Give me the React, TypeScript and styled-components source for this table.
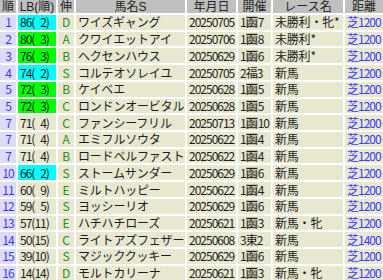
import React from 'react';
import styled, { createGlobalStyle } from 'styled-components';

const GlobalStyle = createGlobalStyle`
  body {
    margin: 0;
    background: #ffffff;
  }
`;

type Tone = 'cyan' | 'lime' | 'plain';

interface IRow {
  rank: number;
  lb: string;
  tone: Tone;
  grade: string;
  name: string;
  date: string;
  venue: string;
  race: string;
  dist: string;
}

const rows: IRow[] = [
  { rank: 1, lb: '86( 2)', tone: 'cyan', grade: 'D', name: 'ワイズギャング', date: '20250705', venue: '1函7', race: '未勝利・牝*', dist: '芝1200' },
  { rank: 2, lb: '80( 3)', tone: 'lime', grade: 'A', name: 'クワイエットアイ', date: '20250706', venue: '1函8', race: '未勝利*', dist: '芝1200' },
  { rank: 3, lb: '76( 3)', tone: 'lime', grade: 'B', name: 'ヘクセンハウス', date: '20250629', venue: '1函6', race: '未勝利*', dist: '芝1200' },
  { rank: 4, lb: '74( 2)', tone: 'cyan', grade: 'S', name: 'コルテオソレイユ', date: '20250705', venue: '2福3', race: '新馬', dist: '芝1200' },
  { rank: 5, lb: '72( 3)', tone: 'lime', grade: 'B', name: 'ケイベエ', date: '20250628', venue: '1函5', race: '新馬', dist: '芝1200' },
  { rank: 5, lb: '72( 3)', tone: 'lime', grade: 'C', name: 'ロンドンオービタル', date: '20250628', venue: '1函5', race: '新馬', dist: '芝1200' },
  { rank: 7, lb: '71( 4)', tone: 'plain', grade: 'C', name: 'ファンシーフリル', date: '20250713', venue: '1函10', race: '新馬', dist: '芝1200' },
  { rank: 7, lb: '71( 4)', tone: 'plain', grade: 'A', name: 'エミフルソウタ', date: '20250622', venue: '1函4', race: '新馬', dist: '芝1200' },
  { rank: 7, lb: '71( 4)', tone: 'plain', grade: 'B', name: 'ロードベルファスト', date: '20250622', venue: '1函4', race: '新馬', dist: '芝1200' },
  { rank: 10, lb: '66( 2)', tone: 'cyan', grade: 'S', name: 'ストームサンダー', date: '20250629', venue: '1函6', race: '新馬', dist: '芝1200' },
  { rank: 11, lb: '60( 9)', tone: 'plain', grade: 'E', name: 'ミルトハッピー', date: '20250622', venue: '1函4', race: '新馬', dist: '芝1200' },
  { rank: 12, lb: '59( 5)', tone: 'plain', grade: 'S', name: 'ヨッシーリオ', date: '20250629', venue: '1函6', race: '新馬', dist: '芝1200' },
  { rank: 13, lb: '57(11)', tone: 'plain', grade: 'E', name: 'ハチハチローズ', date: '20250621', venue: '1函3', race: '新馬・牝', dist: '芝1200' },
  { rank: 14, lb: '50(15)', tone: 'plain', grade: 'C', name: 'ライトアズフェザー', date: '20250608', venue: '3東2', race: '新馬', dist: '芝1400' },
  { rank: 15, lb: '39(10)', tone: 'plain', grade: 'S', name: 'マジッククッキー', date: '20250629', venue: '1函6', race: '新馬', dist: '芝1200' },
  { rank: 16, lb: '14(14)', tone: 'plain', grade: 'D', name: 'モルトカリーナ', date: '20250621', venue: '1函3', race: '新馬・牝', dist: '芝1200' }
];

const headers = ['順', 'LB(順)', '伸', '馬名S', '年月日', '開催', 'レース名', '距離'];

const toneColors: Record<Tone, string> = {
  cyan:  '#00ffff',
  lime:  '#00ff00',
  plain: '#e8e8d0'
};

const Sheet = styled.div`
  display: grid;
  grid-template-columns: 16px 38px 16px 109px 49px 33px 70px 38px;
  grid-template-rows: 13px;
  grid-auto-rows: 14.73px;
  gap: 2px;
  width: 383px;
  height: 280px;
  overflow: hidden;
  font-family: "Noto Sans CJK JP", sans-serif;
  font-size: 12px;
  color: #1c1c1c;
`;

const HeadCell = styled.div`
  display: flex;
  align-items: center;
  justify-content: center;
  background: #c0c0c0;
  color: #222222;
  font-family: "Liberation Sans", "Noto Sans CJK JP", sans-serif;
  font-size: 12px;
  line-height: 1;
  white-space: nowrap;
`;

const Cell = styled.div<{ $bg?: string; $center?: boolean; $digits?: boolean; $color?: string }>`
  display: flex;
  align-items: center;
  justify-content: ${({ $center }) => ($center ? 'center' : 'flex-start')};
  padding: ${({ $center }) => ($center ? '0' : '0 0 0 2px')};
  background: ${({ $bg }) => $bg ?? '#e8e8d0'};
  color: ${({ $color }) => $color ?? '#1c1c1c'};
  font-size: 12px;
  letter-spacing: ${({ $digits }) => ($digits ? '-1px' : '-0.2px')};
  line-height: 1;
  white-space: pre;
`;

const RankCell = styled(Cell)`
  background: #dcdcf8;
  color: #3838ff;
`;

const GradeCell = styled(Cell)`
  color: #2e8a22;
`;

const Gap = styled.span`
  display: inline-block;
  width: 5.8px;
`;

const Kan = styled.span`
  background: #c4c0ac;
  letter-spacing: 0;
`;

const Score = ({ text }: { text: string }) => {
  const [head, tail] = text.split(' ');
  if (tail === undefined) return <>{text}</>;
  return (
    <>
      {head}
      <Gap />
      {tail}
    </>
  );
};

const Venue = ({ text }: { text: string }) => {
  const idx = text.indexOf('函');
  if (idx < 0) return <>{text}</>;
  return (
    <>
      {text.slice(0, idx)}
      <Kan>函</Kan>
      {text.slice(idx + 1)}
    </>
  );
};

export default function App() {
  return (
    <>
      <GlobalStyle />
      <Sheet>
        {headers.map((h) => (
          <HeadCell key={h}>{h}</HeadCell>
        ))}
        {rows.map((r, i) => (
          <React.Fragment key={i}>
            <RankCell $center $digits>{r.rank}</RankCell>
            <Cell $bg={toneColors[r.tone]} $digits>
              <Score text={r.lb} />
            </Cell>
            <GradeCell $center>{r.grade}</GradeCell>
            <Cell>{r.name}</Cell>
            <Cell $digits>{r.date}</Cell>
            <Cell $digits>
              <Venue text={r.venue} />
            </Cell>
            <Cell>{r.race}</Cell>
            <Cell $digits $color="#3a3aff">{r.dist}</Cell>
          </React.Fragment>
        ))}
      </Sheet>
    </>
  );
}
